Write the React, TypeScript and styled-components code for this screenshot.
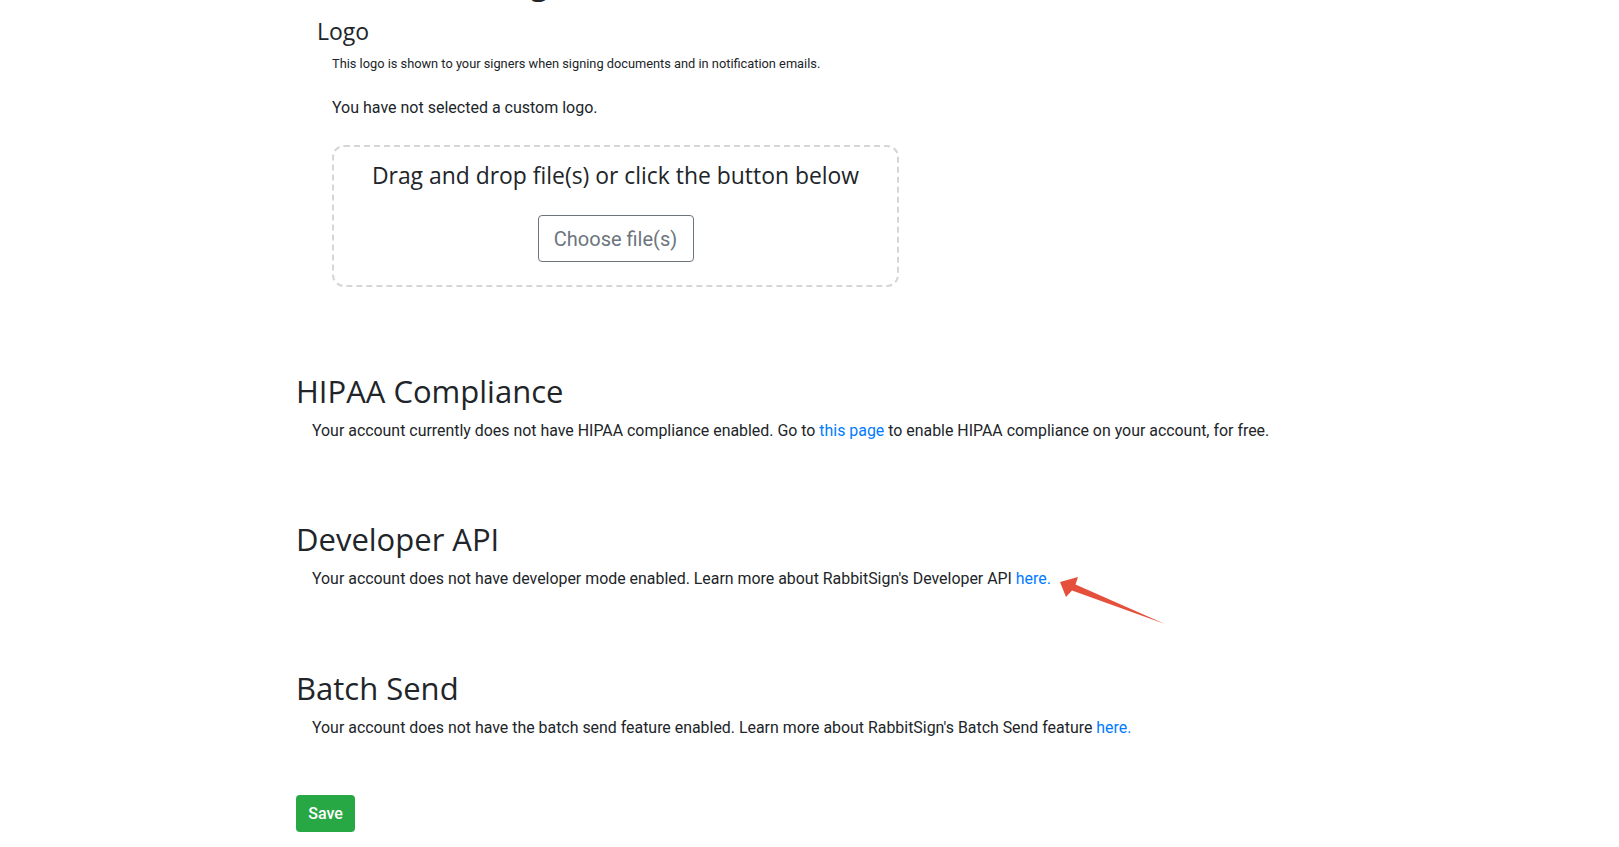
import React from "react";
import styled, { createGlobalStyle } from "styled-components";

const Global = createGlobalStyle`
  html, body { margin: 0; padding: 0; background: #fff; }
  body { font-family: Roboto, "Liberation Sans", sans-serif; color: #212529; overflow: hidden; }
  * { box-sizing: border-box; }
`;

const Page = styled.div`
  position: relative;
  width: 1619px;
  height: 847px;
  overflow: hidden;
  padding-left: 296px;
  display: flex;
  flex-direction: column;
  align-items: flex-start;
`;

const SectionTitle = styled.h2<{ $mt: number }>`
  margin: ${(p) => p.$mt}px 0 0 0;
  font-family: "Open Sans", "Noto Sans", sans-serif;
  font-weight: 400;
  font-size: 31px;
  line-height: 36px;
  color: #212529;
`;

const SubSection = styled.div`
  padding-left: 21px;
  margin-top: 16px;
  display: flex;
  flex-direction: column;
  align-items: flex-start;
`;

const SubTitle = styled.h4`
  margin: 0;
  font-family: "Open Sans", "Noto Sans", sans-serif;
  font-weight: 400;
  font-size: 23px;
  line-height: 29px;
  color: #212529;
`;

const SubBody = styled.div`
  padding-left: 15px;
  display: flex;
  flex-direction: column;
  align-items: flex-start;
`;

const Note = styled.p`
  margin: 8px 0 0 0;
  font-size: 12.8px;
  line-height: 19px;
  color: #212529;
`;

const Text = styled.p<{ $mt: number }>`
  margin: ${(p) => p.$mt}px 0 0 0;
  font-size: 16px;
  line-height: 24px;
  color: #212529;
`;

const Indented = styled(Text)`
  padding-left: 16px;
  font-size: 15.92px;
`;

const Link = styled.a`
  color: #007bff;
  text-decoration: none;
  cursor: pointer;
`;

const DropZone = styled.div`
  margin-top: 25px;
  width: 567px;
  height: 142px;
  border: 2px dashed #d6d6d6;
  border-radius: 12px;
  display: flex;
  flex-direction: column;
  align-items: center;
  padding-top: 13px;
`;

const DropText = styled.div`
  font-family: "Open Sans", "Noto Sans", sans-serif;
  font-size: 22.9px;
  line-height: 31px;
  color: #212529;
`;

const OutlineButton = styled.button`
  margin-top: 24px;
  height: 47px;
  width: 156px;
  padding: 0;
  border: 1px solid #6c757d;
  border-radius: 4px;
  background: #fff;
  color: #6c757d;
  font-family: Roboto, "Liberation Sans", sans-serif;
  font-size: 20px;
`;

const SaveButton = styled.button`
  margin-top: 55px;
  width: 59px;
  height: 37px;
  padding: 0;
  border: none;
  border-radius: 4px;
  background: #28a745;
  color: #fff;
  font-family: Roboto, "Liberation Sans", sans-serif;
  font-weight: 500;
  font-size: 16px;
`;

const ArrowSvg = styled.svg`
  position: absolute;
  left: 1055px;
  top: 570px;
  pointer-events: none;
`;

const Arrow = () => (
  <ArrowSvg width="115" height="60" viewBox="1055 570 115 60">
    <polygon
      points="1060,582 1078,577 1075.5,584.5 1165,624 1072,590.5 1066,597"
      fill="#e5503c"
    />
  </ArrowSvg>
);

export default function App() {
  return (
    <>
      <Global />
      <Page>
        <SectionTitle $mt={-35}>Custom Branding</SectionTitle>
        <SubSection>
          <SubTitle>Logo</SubTitle>
          <SubBody>
            <Note>
              This logo is shown to your signers when signing documents and in notification emails.
            </Note>
            <Text $mt={23}>You have not selected a custom logo.</Text>
            <DropZone>
              <DropText>Drag and drop file(s) or click the button below</DropText>
              <OutlineButton>Choose file(s)</OutlineButton>
            </DropZone>
          </SubBody>
        </SubSection>

        <SectionTitle $mt={86}>HIPAA Compliance</SectionTitle>
        <Indented $mt={10}>
          Your account currently does not have HIPAA compliance enabled. Go to{" "}
          <Link>this page</Link> to enable HIPAA compliance on your account, for free.
        </Indented>

        <SectionTitle $mt={78}>Developer API</SectionTitle>
        <Indented $mt={10}>
          Your account does not have developer mode enabled. Learn more about RabbitSign's
          Developer API <Link>here.</Link>
        </Indented>

        <SectionTitle $mt={79}>Batch Send</SectionTitle>
        <Indented $mt={10}>
          Your account does not have the batch send feature enabled. Learn more about
          RabbitSign's Batch Send feature <Link>here.</Link>
        </Indented>

        <SaveButton>Save</SaveButton>
        <Arrow />
      </Page>
    </>
  );
}
